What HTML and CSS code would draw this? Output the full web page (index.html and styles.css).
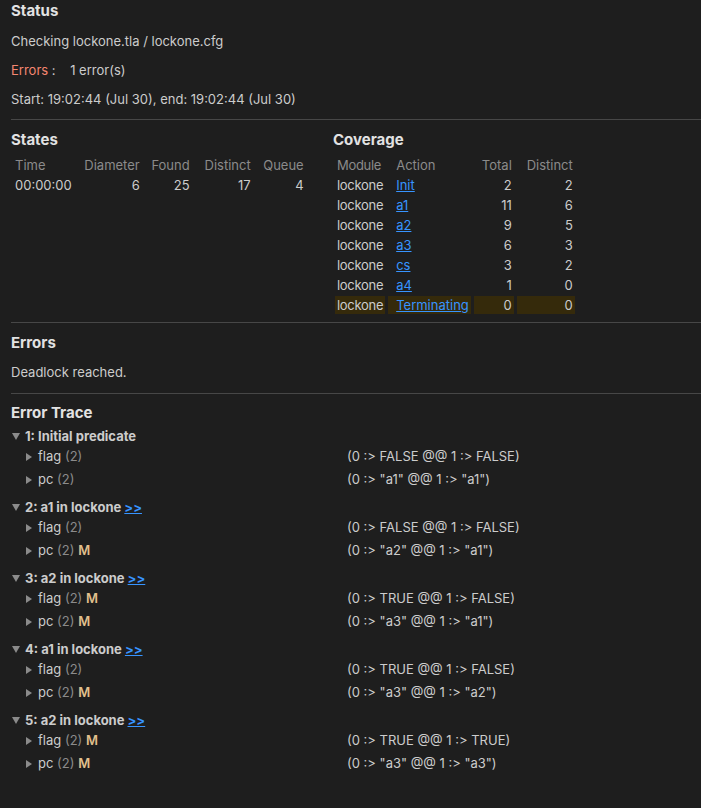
FILE: index.html
```html
<!DOCTYPE html>
<html>
<head>
<meta charset="utf-8">
<link rel="stylesheet" href="styles.css">
</head>
<body>
<section class="status">
  <h2 class="title">Status</h2>
  <p class="line">Checking lockone.tla / lockone.cfg</p>
  <p class="line"><span class="err-label">Errors</span> :&nbsp;&nbsp;&nbsp;&nbsp;1 error(s)</p>
  <p class="line">Start: 19:02:44 (Jul 30), end: 19:02:44 (Jul 30)</p>
</section>
<hr class="sep sep-a">
<section class="stats">
  <div class="states">
    <h2 class="title">States</h2>
    <table class="tbl">
      <tr class="head"><td class="c-time">Time</td><td class="num w-diam">Diameter</td><td class="num w-found">Found</td><td class="num w-dist">Distinct</td><td class="num w-queue">Queue</td></tr>
      <tr><td>00:00:00</td><td class="num">6</td><td class="num">25</td><td class="num">17</td><td class="num">4</td></tr>
    </table>
  </div>
  <div class="coverage">
    <h2 class="title">Coverage</h2>
    <table class="tbl cov">
      <tr class="head"><td class="mod-col">Module</td><td class="act">Action</td><td class="num w-tot">Total</td><td class="num w-cdist">Distinct</td></tr>
      <tr><td class="mod-col">lockone</td><td class="act"><a href="#">Init</a></td><td class="num">2</td><td class="num">2</td></tr>
      <tr><td class="mod-col">lockone</td><td class="act"><a href="#">a1</a></td><td class="num">11</td><td class="num">6</td></tr>
      <tr><td class="mod-col">lockone</td><td class="act"><a href="#">a2</a></td><td class="num">9</td><td class="num">5</td></tr>
      <tr><td class="mod-col">lockone</td><td class="act"><a href="#">a3</a></td><td class="num">6</td><td class="num">3</td></tr>
      <tr><td class="mod-col">lockone</td><td class="act"><a href="#">cs</a></td><td class="num">3</td><td class="num">2</td></tr>
      <tr><td class="mod-col">lockone</td><td class="act"><a href="#">a4</a></td><td class="num">1</td><td class="num">0</td></tr>
      <tr class="hl"><td class="mod-col">lockone</td><td class="act"><a href="#">Terminating</a></td><td class="num">0</td><td class="num">0</td></tr>
    </table>
  </div>
</section>
<hr class="sep sep-b">
<section class="errors">
  <h2 class="title">Errors</h2>
  <p class="line">Deadlock reached.</p>
</section>
<hr class="sep sep-c">
<section class="trace">
  <h2 class="title">Error Trace</h2>

  <div class="state">
    <div class="state-head"><span class="tri-down"></span>1: Initial predicate</div>
    <div class="var"><span class="name"><span class="tri-right"></span>flag <span class="cnt">(2)</span></span><span class="val">(0 :&gt; FALSE @@ 1 :&gt; FALSE)</span></div>
    <div class="var"><span class="name"><span class="tri-right"></span>pc <span class="cnt">(2)</span></span><span class="val">(0 :&gt; "a1" @@ 1 :&gt; "a1")</span></div>
  </div>

  <div class="state">
    <div class="state-head"><span class="tri-down"></span>2: a1 in lockone <a href="#">&gt;&gt;</a></div>
    <div class="var"><span class="name"><span class="tri-right"></span>flag <span class="cnt">(2)</span></span><span class="val">(0 :&gt; FALSE @@ 1 :&gt; FALSE)</span></div>
    <div class="var"><span class="name"><span class="tri-right"></span>pc <span class="cnt">(2)</span> <span class="mod">M</span></span><span class="val">(0 :&gt; "a2" @@ 1 :&gt; "a1")</span></div>
  </div>

  <div class="state">
    <div class="state-head"><span class="tri-down"></span>3: a2 in lockone <a href="#">&gt;&gt;</a></div>
    <div class="var"><span class="name"><span class="tri-right"></span>flag <span class="cnt">(2)</span> <span class="mod">M</span></span><span class="val">(0 :&gt; TRUE @@ 1 :&gt; FALSE)</span></div>
    <div class="var"><span class="name"><span class="tri-right"></span>pc <span class="cnt">(2)</span> <span class="mod">M</span></span><span class="val">(0 :&gt; "a3" @@ 1 :&gt; "a1")</span></div>
  </div>

  <div class="state">
    <div class="state-head"><span class="tri-down"></span>4: a1 in lockone <a href="#">&gt;&gt;</a></div>
    <div class="var"><span class="name"><span class="tri-right"></span>flag <span class="cnt">(2)</span></span><span class="val">(0 :&gt; TRUE @@ 1 :&gt; FALSE)</span></div>
    <div class="var"><span class="name"><span class="tri-right"></span>pc <span class="cnt">(2)</span> <span class="mod">M</span></span><span class="val">(0 :&gt; "a3" @@ 1 :&gt; "a2")</span></div>
  </div>

  <div class="state">
    <div class="state-head"><span class="tri-down"></span>5: a2 in lockone <a href="#">&gt;&gt;</a></div>
    <div class="var"><span class="name"><span class="tri-right"></span>flag <span class="cnt">(2)</span> <span class="mod">M</span></span><span class="val">(0 :&gt; TRUE @@ 1 :&gt; TRUE)</span></div>
    <div class="var"><span class="name"><span class="tri-right"></span>pc <span class="cnt">(2)</span> <span class="mod">M</span></span><span class="val">(0 :&gt; "a3" @@ 1 :&gt; "a3")</span></div>
  </div>
</section>
</body>
</html>
```
FILE: styles.css
```css
html, body {
  margin: 0;
  padding: 0;
  background: #1e1e1e;
}
body {
  color: #cccccc;
  font-family: Inter, "Noto Sans", "Liberation Sans", sans-serif;
  font-size: 13px;
  line-height: 20px;
  padding-left: 11px;
  width: 690px;
  height: 808px;
  overflow: hidden;
}
a {
  color: #3794ff;
  text-decoration: underline;
}
.title {
  margin: 0;
  font-size: 15px;
  line-height: 22px;
  font-weight: 700;
  color: #e2e2e2;
}
.line {
  margin: 9px 0 0 0;
  line-height: 20px;
}
.err-label {
  color: #f48771;
}
.sep {
  border: 0;
  height: 1px;
  background: #474747;
  margin: 0;
}
.sep-a { margin-top: 10px; }
.stats {
  display: flex;
  margin-top: 9px;
}
.states {
  width: 322px;
}
.tbl {
  border-collapse: separate;
  border-spacing: 3px 2px;
  margin-left: -1px;
  margin-top: 3px;
}
.tbl td {
  padding: 0 2px;
  height: 18px;
  line-height: 18px;
  white-space: nowrap;
}
.tbl .head td {
  color: #8b8b8b;
}
.tbl .num {
  text-align: right;
}
.w-diam { width: 61px; }
.w-found { width: 43px; }
.w-dist { width: 54px; }
.w-queue { width: 46px; }
.tbl td.mod-col { letter-spacing: -0.3px; }
.tbl td.act { padding-left: 8px; }
.w-tot { width: 36px; }
.w-cdist { width: 54px; }
.hl td {
  background: #352a0b;
}
.sep-b { margin-top: 6px; }
.errors {
  padding-top: 9px;
}
.errors .line { margin-top: 8px; }
.sep-c { margin-top: 11px; }
.trace {
  padding-top: 8px;
}
.state {
  padding-bottom: 5px;
}
.state:first-of-type { margin-top: 2px; }
.state-head {
  font-weight: 700;
  line-height: 20px;
  display: flex;
  align-items: center;
  color: #cccccc;
  white-space: pre;
}
.tri-down {
  width: 0;
  height: 0;
  border-left: 4px solid transparent;
  border-right: 4px solid transparent;
  border-top: 7px solid #8b8b8b;
  margin-left: 1px;
  margin-right: 5px;
  margin-top: 1px;
}
.var {
  display: flex;
  line-height: 20px;
  margin-bottom: 3px;
}
.name {
  display: block;
  width: 336px;
  padding-left: 15px;
  box-sizing: border-box;
  white-space: nowrap;
}
.tri-right {
  display: inline-block;
  width: 0;
  height: 0;
  border-top: 4px solid transparent;
  border-bottom: 4px solid transparent;
  border-left: 6px solid #8b8b8b;
  margin-right: 6px;
  vertical-align: 0px;
}
.cnt {
  color: #8b8b8b;
}
.mod {
  color: #e2c08d;
  font-weight: 600;
}
.val {
  white-space: nowrap;
}
```
